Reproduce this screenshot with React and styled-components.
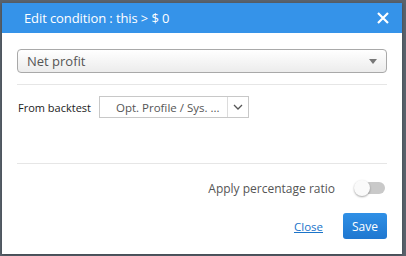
import React from "react";
import styled, { createGlobalStyle } from "styled-components";

const Global = createGlobalStyle`
  html, body {
    margin: 0;
    padding: 0;
    background: #59626c;
    font-family: "Open Sans", "Noto Sans", sans-serif;
  }
`;

const Backdrop = styled.div`
  width: 406px;
  height: 256px;
  padding: 3px 4px 2px 2px;
  box-sizing: border-box;
  border-top: 0;
`;

const Dialog = styled.div`
  width: 400px;
  height: 251px;
  background: #fff;
  display: flex;
  flex-direction: column;
  box-shadow: 0 1px 3px rgba(0, 0, 0, 0.3);
`;

const Header = styled.div`
  height: 30px;
  background: #3593e9;
  display: flex;
  align-items: center;
  justify-content: space-between;
  padding: 0 12px 0 22px;
  color: #fff;
`;

const Title = styled.div`
  font-size: 13px;
  letter-spacing: -0.1px;
`;

const CloseIcon = styled.button`
  border: 0;
  background: none;
  padding: 0;
  width: 14px;
  height: 14px;
  display: flex;
  cursor: pointer;
`;

const Body = styled.div`
  flex: 1;
  padding: 16px 15px 0;
  display: flex;
  flex-direction: column;
`;

const MetricSelect = styled.div`
  height: 24px;
  box-sizing: border-box;
  border: 1px solid #a9a9a9;
  border-radius: 4px;
  background: linear-gradient(#ffffff, #ececec);
  display: flex;
  align-items: center;
  justify-content: space-between;
  padding: 0 9px 0 9px;
  font-size: 13px;
  color: #555;
`;

const Divider = styled.div`
  height: 1px;
  background: #e6e6e6;
  margin: ${(p) => p.$m};
`;

const Row = styled.div`
  display: flex;
  align-items: center;
  gap: 8px;
`;

const Label = styled.span`
  font-size: 11px;
  color: #222;
  margin-left: 1px;
`;

const SourceSelect = styled.div`
  width: 150px;
  height: 22px;
  box-sizing: border-box;
  border: 1px solid #c8c8c8;
  display: flex;
  align-items: stretch;
  font-size: 11.5px;
  color: #555;
`;

const SourceText = styled.div`
  flex: 1;
  display: flex;
  align-items: center;
  padding-left: 16px;
  white-space: nowrap;
  overflow: hidden;
`;

const Chevron = styled.div`
  width: 20px;
  border-left: 1px solid #dcdcdc;
  display: flex;
  align-items: center;
  justify-content: center;
`;

const ToggleRow = styled.div`
  display: flex;
  align-items: center;
  justify-content: flex-end;
  gap: 20px;
  height: 24px;
`;

const ToggleLabel = styled.span`
  font-size: 12px;
  color: #555;
`;

const Track = styled.div`
  position: relative;
  width: 30px;
  height: 12px;
  border-radius: 6px;
  background: #c9c9c9;
  margin-right: 2px;
`;

const Knob = styled.div`
  position: absolute;
  left: -1px;
  top: -2px;
  width: 16px;
  height: 16px;
  border-radius: 50%;
  background: #fafafa;
  box-shadow: 0 1px 2px rgba(0, 0, 0, 0.35);
`;

const Footer = styled.div`
  display: flex;
  align-items: center;
  justify-content: flex-end;
  gap: 20px;
  margin-top: 13px;
`;

const LinkButton = styled.a`
  font-size: 11.5px;
  color: #1b74c9;
  text-decoration: underline;
  cursor: pointer;
`;

const SaveButton = styled.button`
  width: 44px;
  height: 26px;
  border: 0;
  border-radius: 3px;
  background: linear-gradient(#2f90e6, #1f77d0);
  color: #fff;
  font-family: inherit;
  font-size: 12px;
  padding: 0;
  cursor: pointer;
`;

export default function App() {
  return (
    <>
      <Global />
      <Backdrop>
        <Dialog>
          <Header>
            <Title>Edit condition : this &gt; $ 0</Title>
            <CloseIcon>
              <svg width="14" height="14" viewBox="0 0 14 14">
                <path d="M2 2L12 12M12 2L2 12" stroke="#fff" strokeWidth="2.2" />
              </svg>
            </CloseIcon>
          </Header>
          <Body>
            <MetricSelect>
              <span>Net profit</span>
              <svg width="8" height="5" viewBox="0 0 8 5">
                <path d="M0 0H8L4 5Z" fill="#777" />
              </svg>
            </MetricSelect>
            <Divider $m="11px 0 11px" />
            <Row>
              <Label>From backtest</Label>
              <SourceSelect>
                <SourceText>Opt. Profile / Sys. ...</SourceText>
                <Chevron>
                  <svg width="10" height="6" viewBox="0 0 10 6">
                    <path d="M1 1L5 5L9 1" stroke="#555" strokeWidth="1.3" fill="none" />
                  </svg>
                </Chevron>
              </SourceSelect>
            </Row>
            <Divider $m="45px 0 12px" />
            <ToggleRow>
              <ToggleLabel>Apply percentage ratio</ToggleLabel>
              <Track>
                <Knob />
              </Track>
            </ToggleRow>
            <Footer>
              <LinkButton>Close</LinkButton>
              <SaveButton>Save</SaveButton>
            </Footer>
          </Body>
        </Dialog>
      </Backdrop>
    </>
  );
}
